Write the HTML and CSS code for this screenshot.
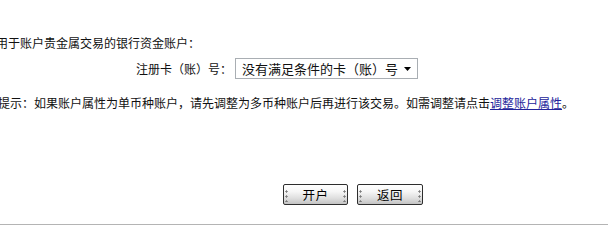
FILE: index.html
```html
<!DOCTYPE html>
<html lang="zh-CN">
<head>
<meta charset="utf-8">
<title>开户</title>
<link rel="stylesheet" href="styles.css">
</head>
<body>
<div class="page">
  <div class="content">
    <p class="intro">用于账户贵金属交易的银行资金账户：</p>
    <div class="field">
      <span class="field-label">注册卡（账）号：</span>
      <div class="select">
        <span class="select-text">没有满足条件的卡（账）号</span>
        <svg class="select-arrow" width="7" height="4" viewBox="0 0 7 4"><path d="M0 0H7L3.5 4Z" fill="#000"/></svg>
      </div>
    </div>
    <p class="tip">提示：如果账户属性为单币种账户，请先调整为多币种账户后再进行该交易。如需调整请点击<a class="tip-link" href="#">调整账户属性</a>。</p>
    <div class="actions">
      <button class="btn" type="button"><span class="dots"></span><span class="btn-label">开户</span><span class="dots"></span></button>
      <button class="btn btn-wide" type="button"><span class="dots"></span><span class="btn-label">返回</span><span class="dots"></span></button>
    </div>
  </div>
  <div class="footer-line"></div>
</div>
</body>
</html>
```

FILE: styles.css
```css
html, body {
  margin: 0;
  padding: 0;
  background: #ffffff;
}

body {
  font-family: "Noto Sans CJK SC", "Noto Sans", sans-serif;
  color: #111111;
  overflow: hidden;
}

.page {
  width: 608px;
  height: 234px;
  overflow: hidden;
}

.content {
  padding-top: 35px;
}

.intro {
  margin: 0 0 0 -4px;
  height: 16px;
  line-height: 16px;
  font-size: 12px;
  white-space: nowrap;
}

.field {
  margin-top: 7px;
  display: flex;
  align-items: center;
  height: 21px;
}

.field-label {
  width: 232px;
  text-align: right;
  font-size: 12px;
  line-height: 16px;
  white-space: nowrap;
}

.select {
  margin-left: 3px;
  width: 183px;
  height: 21px;
  box-sizing: border-box;
  border: 1px solid #a9aeb3;
  display: flex;
  align-items: center;
  justify-content: space-between;
  padding: 0 6px 0 6px;
}

.select-text {
  font-size: 13px;
  line-height: 17px;
  color: #111;
  white-space: nowrap;
}

.select-arrow {
  display: block;
}

.tip {
  margin: 16px 0 0 -2px;
  height: 16px;
  line-height: 16px;
  font-size: 12px;
  white-space: nowrap;
}

.tip-link {
  color: #23239a;
  text-decoration: underline;
}

.actions {
  margin-top: 73px;
  padding-left: 283px;
  display: flex;
  gap: 9px;
}

.btn {
  width: 65px;
  height: 21px;
  box-sizing: border-box;
  margin: 0;
  padding: 0 1px;
  border: 1px solid #2e2e2e;
  border-radius: 2px;
  background: linear-gradient(to bottom, #ffffff 0%, #f6f6f6 35%, #dedede 70%, #c4c4c4 100%);
  display: flex;
  align-items: center;
  justify-content: space-between;
  font-family: "Noto Sans CJK SC", sans-serif;
  font-size: 12.5px;
  color: #000;
  cursor: pointer;
}

.btn-wide {
  width: 66px;
}

.btn-label {
  line-height: 17px;
  letter-spacing: 0.5px;
}

.dots {
  width: 3px;
  height: 14px;
  background-image: radial-gradient(circle, #7a7a7a 0.9px, transparent 1.3px);
  background-size: 3px 5px;
  background-repeat: repeat-y;
  background-position: 0 1px;
}

.footer-line {
  margin-top: 19px;
  height: 1px;
  background: #b4b4b4;
}
```
